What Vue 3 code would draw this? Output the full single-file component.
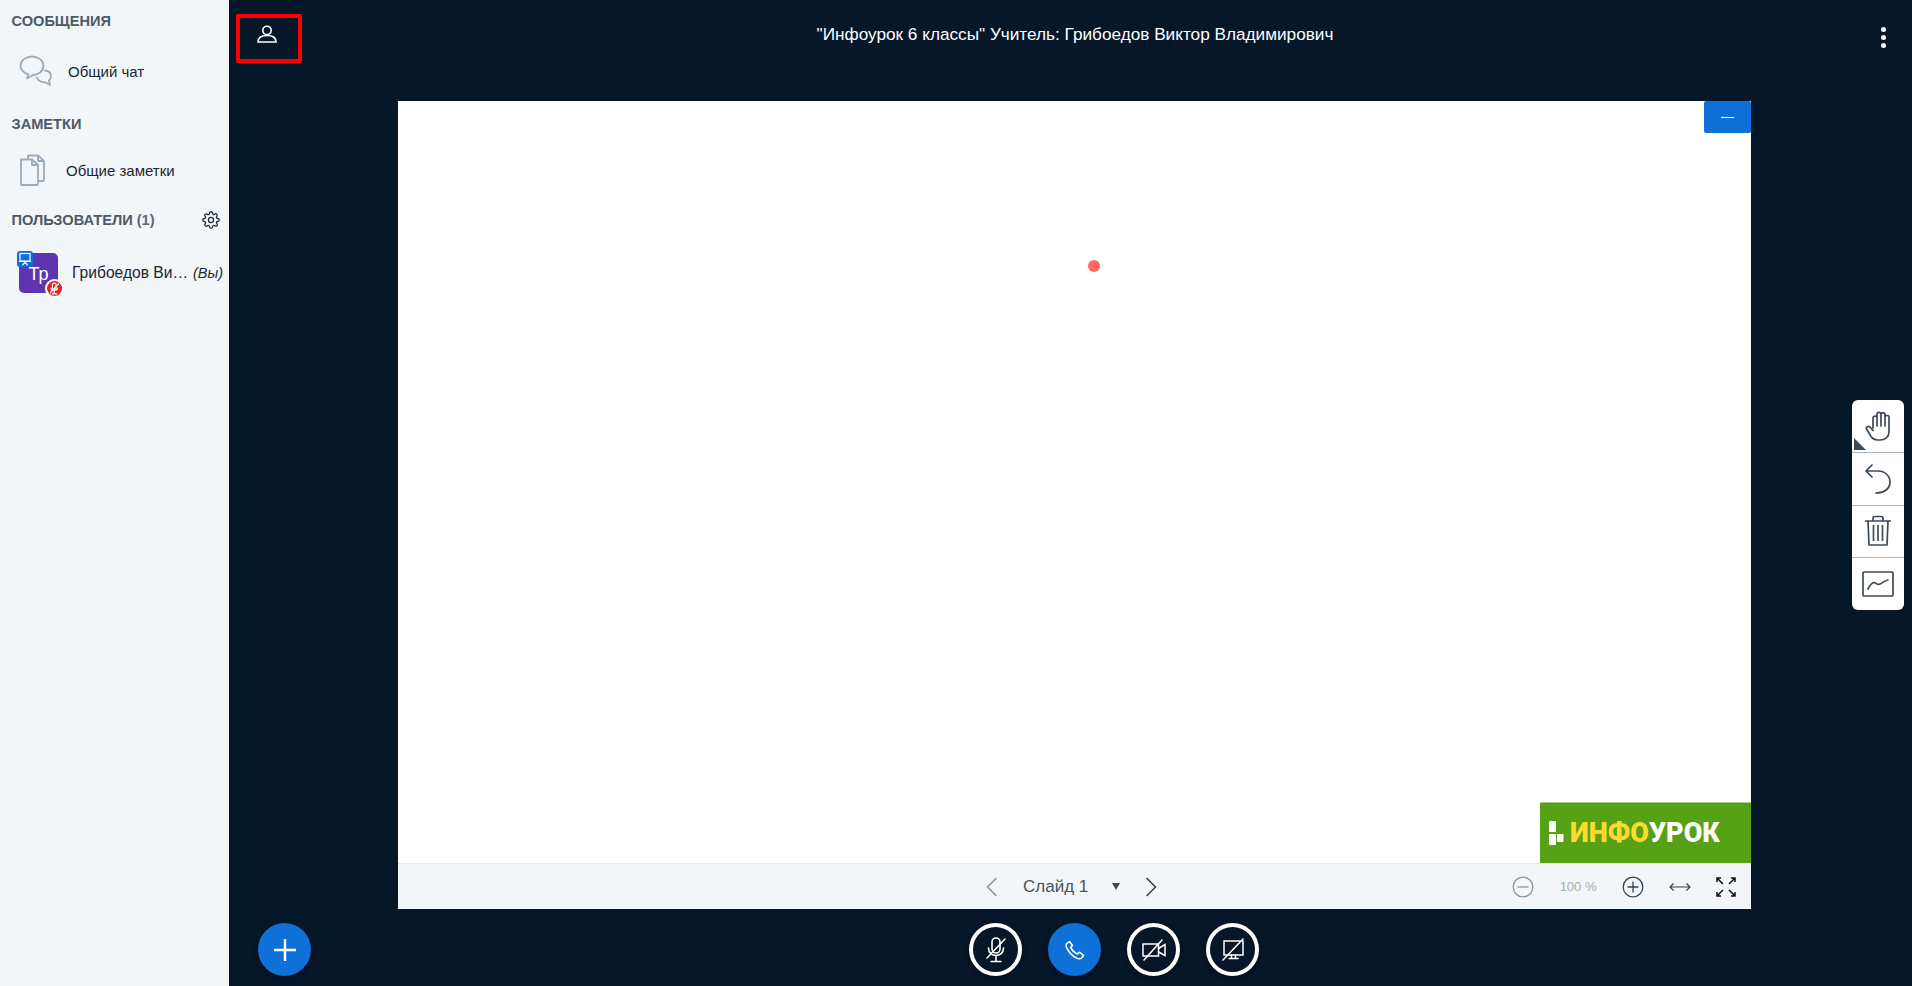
<template>
  <div class="app">
    <aside class="sidebar">
      <h2 class="label">СООБЩЕНИЯ</h2>
      <div class="row chat">
        <svg class="side-icon" width="34" height="32" viewBox="0 0 34 32" fill="none" stroke="#9aabb9" stroke-width="1.8" stroke-linejoin="round" stroke-linecap="round">
          <path d="M8 23.5 L9.5 19.5 C5 18 1.5 15 1.5 10.8 C1.5 5.5 7 1.5 13 1.5 C19 1.5 24.5 5.5 24.5 10.8 C24.5 16 19 20 14 20 Z" />
          <path d="M26 15.5 C29.5 16 32 18 32 21 C32 23 31 24.5 30 25.5 L31 30 L26 27.3 C22 27.5 18.5 25.5 18 22.5" />
        </svg>
        <span class="row-text">Общий чат</span>
      </div>
      <h2 class="label notes-label">ЗАМЕТКИ</h2>
      <div class="row notes">
        <svg class="side-icon" width="26" height="32" viewBox="0 0 26 32" fill="none" stroke="#9aabb9" stroke-width="1.8" stroke-linejoin="round">
          <path d="M9 5 V1.5 H19 L25 7 V26 Q25 27 24 27 H20" />
          <path d="M19 1.5 V7 H25" />
          <path d="M2 5.5 H13 L19 11 V30 Q19 31 18 31 H3 Q2 31 2 30 Z" />
          <path d="M13 5.5 V11 H19" />
        </svg>
        <span class="row-text">Общие заметки</span>
      </div>
      <div class="users-head">
        <h2 class="label">ПОЛЬЗОВАТЕЛИ <span class="count">(1)</span></h2>
        <svg width="18" height="18" viewBox="0 0 24 24" fill="none" stroke="#1b2a38" stroke-width="1.7" stroke-linejoin="round">
          <circle cx="12" cy="12" r="3.4" />
          <path d="M19.4 15a1.65 1.65 0 0 0 .33 1.82l.06.06a2 2 0 0 1 0 2.83 2 2 0 0 1-2.83 0l-.06-.06a1.65 1.65 0 0 0-1.82-.33 1.65 1.65 0 0 0-1 1.51V21a2 2 0 0 1-2 2 2 2 0 0 1-2-2v-.09A1.65 1.65 0 0 0 9 19.4a1.65 1.65 0 0 0-1.82.33l-.06.06a2 2 0 0 1-2.83 0 2 2 0 0 1 0-2.83l.06-.06a1.65 1.65 0 0 0 .33-1.82 1.65 1.65 0 0 0-1.51-1H3a2 2 0 0 1-2-2 2 2 0 0 1 2-2h.09A1.65 1.65 0 0 0 4.6 9a1.65 1.65 0 0 0-.33-1.82l-.06-.06a2 2 0 0 1 0-2.83 2 2 0 0 1 2.83 0l.06.06a1.65 1.65 0 0 0 1.82.33H9a1.65 1.65 0 0 0 1-1.51V3a2 2 0 0 1 2-2 2 2 0 0 1 2 2v.09a1.65 1.65 0 0 0 1 1.51 1.65 1.65 0 0 0 1.82-.33l.06-.06a2 2 0 0 1 2.83 0 2 2 0 0 1 0 2.83l-.06.06a1.65 1.65 0 0 0-.33 1.82V9a1.65 1.65 0 0 0 1.51 1H21a2 2 0 0 1 2 2 2 2 0 0 1-2 2h-.09a1.65 1.65 0 0 0-1.51 1z" />
        </svg>
      </div>
      <div class="user">
        <div class="avatar">
          <span class="initials">Тр</span>
          <span class="badge-present">
            <svg width="14" height="14" viewBox="0 0 14 14" fill="none" stroke="#fff" stroke-width="1.2">
              <rect x="2" y="1.5" width="10" height="7.5" />
              <path d="M1 9.5 H13 M7 9.5 V11 M7 10.5 L4.5 13 M7 10.5 L9.5 13" />
            </svg>
          </span>
          <span class="badge-mic">
            <svg width="13" height="13" viewBox="0 0 13 13" fill="none" stroke="#fff" stroke-width="1.2" stroke-linecap="round">
              <rect x="4.5" y="1" width="3.6" height="6.5" rx="1.8" />
              <path d="M3 6 C3 9 9.5 9 9.5 6 M6.3 9 V11.5 M4 11.8 H8.6 M2.5 10.5 L10.5 2" />
            </svg>
          </span>
        </div>
        <span class="user-name">Грибоедов Ви…</span>
        <em class="you">(Вы)</em>
      </div>
    </aside>

    <main class="main">
      <header class="top">
        <div class="user-toggle">
          <svg width="20" height="18" viewBox="0 0 20 18" fill="none" stroke="#fff" stroke-width="1.6">
            <circle cx="10" cy="5.4" r="4.2" />
            <path d="M1 17 C1 12.5 5 10.5 10 10.5 C15 10.5 19 12.5 19 17 Z" />
          </svg>
        </div>
        <h1 class="title">"Инфоурок 6 классы" Учитель: Грибоедов Виктор Владимирович</h1>
        <div class="dots"><i></i><i></i><i></i></div>
      </header>

      <section class="stage">
        <div class="slide">
          <div class="board">
            <button class="minimize"><span></span></button>
            <span class="cursor"></span>
            <div class="logo">
              <svg width="15" height="24" viewBox="0 0 15 24" fill="#fff">
                <path d="M1 0 H6 Q7 0 7 1 V10 Q7 11 6 11 H1 Q0 11 0 10 V1 Q0 0 1 0 Z" />
                <path d="M1 13 H6 Q7 13 7 14 V23 Q7 24 6 24 H1 Q0 24 0 23 V14 Q0 13 1 13 Z" />
                <path d="M9 13 H13.5 Q14.5 13 14.5 14 V20 Q14.5 21 13.5 21 H9 Q8 21 8 20 V14 Q8 13 9 13 Z" />
              </svg>
              <span class="logo-text"><b>ИНФО</b>УРОК</span>
            </div>
          </div>
          <div class="slide-bar">
            <div class="pager">
              <svg class="prev" width="12" height="20" viewBox="0 0 12 20" fill="none" stroke="#8a949e" stroke-width="1.5"><path d="M10.5 1 L1.5 10 L10.5 19" /></svg>
              <span class="slide-name">Слайд 1</span>
              <span class="caret"></span>
              <svg class="next" width="12" height="20" viewBox="0 0 12 20" fill="none" stroke="#36434f" stroke-width="1.5"><path d="M1.5 1 L10.5 10 L1.5 19" /></svg>
            </div>
            <div class="zoom">
              <svg width="22" height="22" viewBox="0 0 22 22" fill="none" stroke="#8a949e" stroke-width="1.3"><circle cx="11" cy="11" r="9.8" /><path d="M5.5 11 H16.5" /></svg>
              <span class="percent">100 %</span>
              <svg width="22" height="22" viewBox="0 0 22 22" fill="none" stroke="#36434f" stroke-width="1.3"><circle cx="11" cy="11" r="9.8" /><path d="M5.5 11 H16.5 M11 5.5 V16.5" /></svg>
              <svg width="22" height="10" viewBox="0 0 22 10" fill="none" stroke="#36434f" stroke-width="1.2"><path d="M1 5 H21 M4.5 1.5 L1 5 L4.5 8.5 M17.5 1.5 L21 5 L17.5 8.5" /></svg>
              <svg width="20" height="20" viewBox="0 0 20 20" fill="none" stroke="#111" stroke-width="1.5"><path d="M1 5 V1 H5 M1 1 L7 7 M15 1 H19 V5 M19 1 L13 7 M1 15 V19 H5 M1 19 L7 13 M15 19 H19 V15 M19 19 L13 13" /></svg>
            </div>
          </div>
        </div>
      </section>

      <footer class="bottom">
        <button class="round filled plus">
          <svg width="24" height="24" viewBox="0 0 24 24" stroke="#fff" stroke-width="2.4"><path d="M12 1 V23 M1 12 H23" /></svg>
        </button>
        <div class="controls">
          <button class="round">
            <svg width="24" height="26" viewBox="0 0 24 26" fill="none" stroke="#fff" stroke-width="1.6" stroke-linecap="round">
              <rect x="8" y="1" width="8" height="15" rx="4" />
              <path d="M4.5 11 C4.5 21 19.5 21 19.5 11 M12 19.5 V24 M7 24.5 H17 M3 21 L21 2" />
            </svg>
          </button>
          <button class="round filled">
            <svg width="20" height="20" viewBox="0 0 20 20" fill="none" stroke="#fff" stroke-width="1.5" stroke-linejoin="round">
              <path d="M1.5 3.8 L4.5 1.5 L7.5 5.5 L5.6 7.4 C6.8 10 9.6 12.8 12.4 14 L14.4 12.2 L18.6 15.4 L16.4 18 C15.4 19 13.4 19 11.8 18.2 C7.5 16 3.4 11.6 1.6 7.6 C1 6.2 1 4.8 1.5 3.8 Z" />
            </svg>
          </button>
          <button class="round">
            <svg width="24" height="22" viewBox="0 0 24 22" fill="none" stroke="#fff" stroke-width="1.5" stroke-linecap="round">
              <rect x="1" y="5" width="15.5" height="12" />
              <path d="M16.5 9.5 L23 5.5 V16.5 L16.5 13 M2 21 L20 1" />
            </svg>
          </button>
          <button class="round">
            <svg width="24" height="24" viewBox="0 0 24 24" fill="none" stroke="#fff" stroke-width="1.5" stroke-linecap="round">
              <rect x="3" y="3" width="19" height="14" />
              <path d="M8 20.5 H17 M10.5 17 V20.5 M14.5 17 V20.5 M2 22 L22 1" />
            </svg>
          </button>
        </div>
      </footer>
    </main>

    <div class="tools">
      <div class="tool hand">
        <svg width="26" height="30" viewBox="0 0 26 30" fill="none" stroke="#3d4b59" stroke-width="1.7" stroke-linecap="round" stroke-linejoin="round">
          <path d="M8 17 V7 C8 4.5 12 4.5 12 7 V15 M12 6 V3 C12 0.8 16 0.8 16 3 V15 M16 3.5 C16 1.4 20 1.4 20 3.5 V15 M20 6 C20 4 24 4 24 6 V21 C24 26 20 29 15 29 H12.5 C10 29 7.5 27.5 6 25.5 L1.5 18 C0.5 16 3.5 14.5 5 16 L8 19.5" />
        </svg>
        <span class="corner"></span>
      </div>
      <div class="tool">
        <svg width="28" height="30" viewBox="0 0 28 30" fill="none" stroke="#3d4b59" stroke-width="1.7" stroke-linecap="round" stroke-linejoin="round">
          <path d="M8 1 L2 7 L8 13 M2 7 H14 C21 7 26 12 26 18 C26 24 21 29 12 29" />
        </svg>
      </div>
      <div class="tool">
        <svg width="28" height="32" viewBox="0 0 28 32" fill="none" stroke="#3d4b59" stroke-width="1.7" stroke-linejoin="round">
          <path d="M1 6 H27 M9 6 V3 C9 2 10 1.5 11 1.5 H17 C18 1.5 19 2 19 3 V6 M4 6 L5 30 H23 L24 6 M9.5 10 V26 M14 10 V26 M18.5 10 V26" />
        </svg>
      </div>
      <div class="tool">
        <svg width="32" height="26" viewBox="0 0 32 26" fill="none" stroke="#3d4b59" stroke-width="1.7" stroke-linejoin="round" stroke-linecap="round">
          <rect x="1" y="1" width="30" height="24" rx="1" />
          <path d="M6 18 C10 10 13 11 15 13 C18 15 21 10 26 9" />
        </svg>
      </div>
    </div>
  </div>
</template>

<script setup>
</script>

<style>
html, body { margin: 0; background: #06172a; }
</style>

<style scoped>
.app {
  position: relative;
  display: flex;
  width: 1912px;
  height: 986px;
  overflow: hidden;
  background: #06172a;
  font-family: "Liberation Sans", Arial, sans-serif;
}
.sidebar {
  flex: 0 0 229px;
  box-sizing: border-box;
  background: #f3f6f9;
  padding: 13px 0 0 0;
}
.label {
  margin: 0;
  font-size: 14.6px;
  line-height: 16px;
  font-weight: 700;
  color: #4c5966;
  padding-left: 11.5px;
}
.count { font-weight: 700; color: #5d6a76; }
.row {
  display: flex;
  align-items: center;
  height: 42px;
  color: #1a2632;
  font-size: 15px;
}
.chat { margin-top: 21px; padding-left: 19px; gap: 15px; }
.notes-label { margin-top: 24px; }
.notes { margin-top: 18px; padding-left: 19px; gap: 21px; height: 40px; }
.side-icon { flex: none; display: block; }
.users-head {
  display: flex;
  align-items: center;
  justify-content: space-between;
  margin-top: 21px;
  height: 18px;
  padding-right: 9px;
}
.user {
  display: flex;
  align-items: center;
  margin-top: 24px;
  padding-left: 19px;
  color: #1a2632;
  font-size: 15.6px;
}
.avatar {
  position: relative;
  flex: none;
  width: 39px;
  height: 40px;
  border-radius: 5px;
  background: #5e35b1;
  color: #fff;
  font-size: 18px;
  font-weight: 400;
  line-height: 42px;
  text-align: center;
  margin-right: 14px;
}
.badge-present {
  position: absolute;
  left: -2px;
  top: -2px;
  width: 16px;
  height: 16px;
  border-radius: 3px;
  background: #0f70d7;
  display: flex;
  align-items: center;
  justify-content: center;
}
.badge-mic {
  position: absolute;
  right: -6px;
  bottom: -5px;
  width: 15px;
  height: 15px;
  border-radius: 50%;
  background: #df2721;
  border: 2px solid #fff;
  display: flex;
  align-items: center;
  justify-content: center;
}
.user-name { white-space: nowrap; }
.you { margin-left: 5px; font-size: 14.5px; white-space: nowrap; }

.main {
  flex: 1;
  min-width: 0;
  display: flex;
  flex-direction: column;
}
.top {
  position: relative;
  flex: 0 0 101px;
}
.user-toggle {
  position: absolute;
  left: 7px;
  top: 14px;
  box-sizing: border-box;
  width: 66px;
  height: 49px;
  border: 4px solid #f00;
  border-radius: 2px;
  display: flex;
  justify-content: center;
  padding-top: 7px;
  padding-right: 5px;
}
.user-toggle svg { display: block; }
.title {
  margin: 0;
  padding-top: 25px;
  padding-left: 9px;
  text-align: center;
  color: #fff;
  font-size: 17.2px;
  line-height: 18px;
  font-weight: 400;
}
.dots {
  position: absolute;
  right: 26px;
  top: 27px;
  display: flex;
  flex-direction: column;
  gap: 3px;
}
.dots i {
  display: block;
  width: 5px;
  height: 5px;
  border-radius: 50%;
  background: #fff;
}
.stage {
  flex: 1;
  min-height: 0;
  padding: 0 161px 0 169px;
  display: flex;
}
.slide {
  flex: 1;
  display: flex;
  flex-direction: column;
}
.board {
  position: relative;
  flex: 1;
  background: #fff;
  display: flex;
  justify-content: flex-end;
  align-items: flex-end;
}
.minimize {
  position: absolute;
  right: 0;
  top: 0;
  width: 47px;
  height: 32px;
  border: 0;
  border-radius: 2px;
  background: #0f70d7;
  padding: 0;
  display: flex;
  align-items: center;
  justify-content: center;
}
.minimize span {
  display: block;
  width: 13px;
  height: 1px;
  background: #fff;
}
.cursor {
  position: absolute;
  left: 690px;
  top: 159px;
  width: 12px;
  height: 12px;
  border-radius: 50%;
  background: #f66;
}
.logo {
  flex: 0 0 211px;
  box-sizing: border-box;
  height: 61px;
  background: #57a116;
  border-top: 1px solid #a9c98f;
  display: flex;
  align-items: center;
  padding-left: 9px;
  gap: 6px;
}
.logo svg { display: block; flex: none; }
.logo-text {
  color: #fff;
  font-family: Roboto, "Liberation Sans", sans-serif;
  font-weight: 900;
  font-size: 27px;
  line-height: 1;
  white-space: nowrap;
}
.logo-text b { color: #fddb2c; font-weight: 900; }
.slide-bar {
  flex: 0 0 46px;
  box-sizing: border-box;
  background: #f3f6f9;
  border-top: 1px solid #e5e9ee;
  position: relative;
  display: flex;
  align-items: center;
  color: #4a5764;
}
.pager {
  display: flex;
  align-items: center;
  margin-left: 588px;
}
.slide-name { margin-left: 25px; font-size: 17px; color: #45525f; white-space: nowrap; }
.caret {
  margin-left: 24px;
  width: 0;
  height: 0;
  border-left: 4px solid transparent;
  border-right: 4px solid transparent;
  border-top: 7px solid #3d4b59;
}
.next { margin-left: 24.5px; }
.zoom {
  margin-left: auto;
  margin-right: 15px;
  display: flex;
  align-items: center;
}
.percent {
  font-size: 13px;
  color: #a4adb5;
  margin: 0 25.5px 0 26px;
  white-space: nowrap;
}
.zoom svg:nth-of-type(3) { margin-left: 25px; }
.zoom svg:nth-of-type(4) { margin-left: 25px; }
.bottom {
  flex: 0 0 77px;
  position: relative;
  display: flex;
  justify-content: center;
}
.round {
  box-sizing: border-box;
  width: 53px;
  height: 53px;
  border-radius: 50%;
  border: 4px solid #fff;
  background: transparent;
  padding: 0;
  display: flex;
  align-items: center;
  justify-content: center;
  box-shadow: 0 2px 6px rgba(0, 0, 0, 0.5);
}
.round svg { display: block; }
.round.filled {
  border: 0;
  background: #0f70d7;
}
.plus {
  position: absolute;
  left: 29px;
  top: 14px;
}
.controls {
  display: flex;
  gap: 26px;
  margin-top: 14px;
  margin-left: 87px;
  height: 53px;
}
.tools {
  position: absolute;
  left: 1852px;
  top: 400px;
  width: 52px;
  height: 210px;
  background: #fff;
  border-radius: 6px;
  display: flex;
  flex-direction: column;
}
.tool {
  position: relative;
  flex: 1;
  display: flex;
  align-items: center;
  justify-content: center;
  border-bottom: 1px solid #a9b6c2;
}
.tool:last-child { border-bottom: 0; }
.tool svg { display: block; }
.corner {
  position: absolute;
  left: 2px;
  bottom: 2px;
  width: 0;
  height: 0;
  border-left: 12px solid transparent;
  border-bottom: 12px solid #3d4b59;
  transform: scaleX(-1);
}
</style>
